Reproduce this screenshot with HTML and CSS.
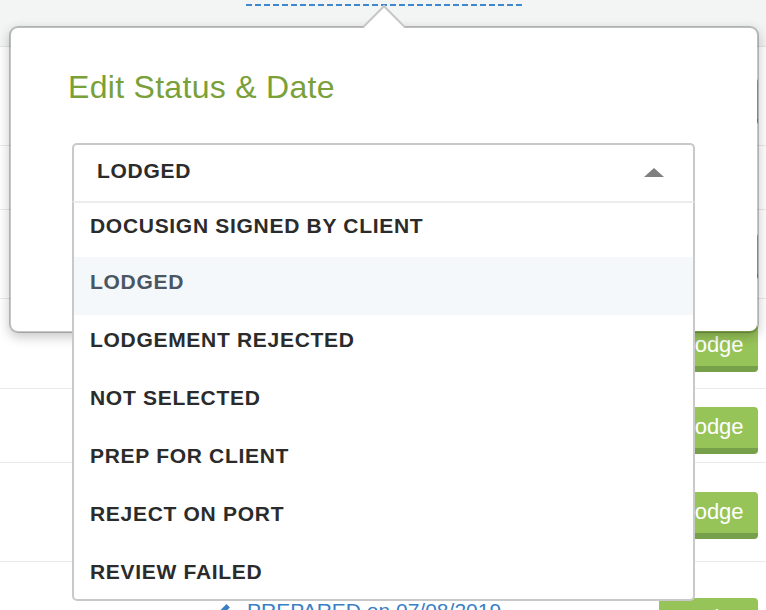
FILE: index.html
```html
<!DOCTYPE html>
<html>
<head>
<meta charset="utf-8">
<link rel="stylesheet" href="styles.css">
</head>
<body>
<div class="page">
  <div class="topbar"><span class="dashed"></span></div>
  <div class="row r1"><span class="lodge">Lodge</span></div>
  <div class="row r2"></div>
  <div class="row r3"><span class="lodge">Lodge</span></div>
  <div class="row r4"><span class="lodge">Lodge</span></div>
  <div class="row r5"><span class="lodge">Lodge</span></div>
  <div class="row r6"><span class="lodge">Lodge</span></div>
  <div class="row r7">
    <span class="prepared">
      <svg class="pencil" viewBox="0 0 20 20" width="20" height="20"><path d="M2 18l1.2-4.6L13.5 3.1l3.4 3.4L6.6 16.8z" fill="#3a7fc4"/></svg>
      <span>PREPARED on 07/08/2019</span>
    </span>
    <span class="lodge">Lodge</span>
  </div>

  <div class="popover">
    <span class="arrow"></span>
    <h2 class="title">Edit Status &amp; Date</h2>
    <div class="select">
      <div class="select-head">
        <span>LODGED</span>
        <span class="caret"></span>
      </div>
      <ul class="menu">
        <li>DOCUSIGN SIGNED BY CLIENT</li>
        <li class="active">LODGED</li>
        <li>LODGEMENT REJECTED</li>
        <li>NOT SELECTED</li>
        <li>PREP FOR CLIENT</li>
        <li>REJECT ON PORT</li>
        <li>REVIEW FAILED</li>
      </ul>
    </div>
  </div>
</div>
</body>
</html>
```
FILE: styles.css
```css
* { box-sizing: border-box; }
html, body { margin: 0; padding: 0; }
body {
  width: 766px;
  height: 610px;
  overflow: hidden;
  background: #fff;
  font-family: "Liberation Sans", Arial, sans-serif;
}
.page { position: relative; width: 766px; height: 610px; overflow: hidden; }

.topbar {
  height: 47px;
  background: #f3f4f4;
  border-bottom: 1px solid #e4e4e2;
  position: relative;
}
.dashed {
  position: absolute;
  left: 246px;
  top: 4px;
  width: 277px;
  height: 2px;
  background: repeating-linear-gradient(90deg, #3f88cf 0 6px, transparent 6px 9px);
}

.row {
  border-bottom: 1px solid #ece9e6;
  display: flex;
  justify-content: flex-end;
  align-items: flex-start;
  padding-right: 8px;
}
.r1 { height: 99px; padding-top: 31px; }
.r2 { height: 64px; }
.r3 { height: 89px; padding-top: 23px; }
.r4 { height: 90px; padding-top: 26px; }
.r5 { height: 74px; padding-top: 18px; }
.r6 { height: 99px; padding-top: 29px; }
.r7 {
  height: 80px;
  padding-top: 36px;
  padding-left: 213px;
  border-bottom: 0;
  justify-content: space-between;
}

.lodge {
  display: flex;
  align-items: center;
  justify-content: center;
  width: 99px;
  height: 47px;
  background: #97c459;
  border-bottom: 6px solid #77a04a;
  border-radius: 4px;
  color: #fff;
  font-size: 22px;
  padding: 0 0 1px 9px;
}

.prepared {
  margin-top: 1px;
  color: #3a7fc4;
  font-size: 21px;
  display: flex;
  align-items: center;
  gap: 14px;
}
.pencil { display: block; }

.popover {
  position: absolute;
  left: 9px;
  top: 26px;
  width: 750px;
  height: 307px;
  background: #fff;
  background-clip: padding-box;
  border: 2px solid rgba(0, 0, 0, 0.22);
  border-radius: 9px;
  box-shadow: 0 4px 12px rgba(0, 0, 0, 0.22);
  padding: 39px 62px 0 61px;
}
.arrow {
  position: absolute;
  left: 358px;
  top: -17px;
  width: 30px;
  height: 30px;
  background: #fff;
  border-top: 2px solid #c6c6c6;
  border-left: 2px solid #c6c6c6;
  transform: rotate(45deg);
}
.title {
  margin: 0 0 0 -4px;
  font-weight: 400;
  font-size: 32px;
  line-height: 40px;
  color: #7aa03a;
  letter-spacing: 0.3px;
}
.select {
  position: relative;
  margin-top: 36px;
  width: 623px;
  border: 2px solid #c9c9c9;
  border-bottom: 0;
  border-radius: 5px 5px 0 0;
}
.select-head {
  height: 56px;
  display: flex;
  align-items: center;
  justify-content: space-between;
  padding: 0 29px 5px 23px;
  font-size: 21px;
  font-weight: 700;
  letter-spacing: 0.7px;
  color: #2b2b2b;
}
.caret {
  width: 0;
  height: 0;
  border-left: 10px solid transparent;
  border-right: 10px solid transparent;
  border-bottom: 9px solid #808080;
  margin-top: 3px;
}
.menu {
  position: absolute;
  left: -2px;
  top: 56px;
  width: 623px;
  height: 400px;
  overflow: hidden;
  margin: 0;
  padding: 0;
  list-style: none;
  background: #fff;
  border: 2px solid #c9c9c9;
  border-top: 2px solid #ececec;
  border-radius: 0 0 5px 5px;
}
.menu li {
  flex: none;
  height: 58px;
  display: flex;
  align-items: center;
  padding: 0 16px 9px;
  font-size: 21px;
  font-weight: 700;
  letter-spacing: 0.7px;
  color: #2b2b2b;
}
.menu li:first-child { height: 54px; }
.menu li.active {
  background: #f5f8fb;
  color: #4b5662;
}
```
